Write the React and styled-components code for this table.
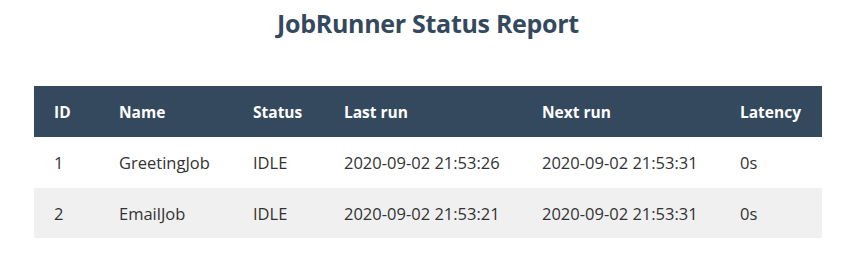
import React from "react";
import styled, { createGlobalStyle } from "styled-components";

const Global = createGlobalStyle`
  html, body { margin: 0; padding: 0; background: #fff; }
  body { font-family: "Open Sans", "Noto Sans", sans-serif; }
`;

const Page = styled.div`
  padding: 0 32px 0 34px;
  display: flex;
  flex-direction: column;
  align-items: center;
`;

const Title = styled.h1`
  margin: 7px 0 47px;
  font-size: 25px;
  line-height: 32px;
  font-weight: 700;
  color: #34495e;
  letter-spacing: -0.3px;
`;

const Table = styled.table`
  width: 788px;
  border-collapse: collapse;
  table-layout: fixed;
  font-size: 16.5px;
  color: #333;
`;

const HeadCell = styled.th`
  height: 51px;
  padding: 0 0 0 20px;
  text-align: left;
  background: #34495e;
  color: #fff;
  font-size: 15.5px;
  font-weight: 700;
`;

const Row = styled.tr`
  background: ${(p) => (p.$alt ? "#f0f0f0" : "#fff")};
`;

const Cell = styled.td`
  height: ${(p) => p.$h || 51}px;
  padding: 0 0 0 20px;
  text-align: left;
`;

const cols = [65, 134, 91, 198, 198, 102];
const headers = ["ID", "Name", "Status", "Last run", "Next run", "Latency"];
const rows = [
  ["1", "GreetingJob", "IDLE", "2020-09-02 21:53:26", "2020-09-02 21:53:31", "0s"],
  ["2", "EmailJob", "IDLE", "2020-09-02 21:53:21", "2020-09-02 21:53:31", "0s"],
];

export default function App() {
  return (
    <>
      <Global />
      <Page>
        <Title>JobRunner Status Report</Title>
        <Table>
          <colgroup>
            {cols.map((w, i) => (
              <col key={i} style={{ width: w }} />
            ))}
          </colgroup>
          <thead>
            <tr>
              {headers.map((h) => (
                <HeadCell key={h}>{h}</HeadCell>
              ))}
            </tr>
          </thead>
          <tbody>
            {rows.map((r, i) => (
              <Row key={i} $alt={i % 2 === 1}>
                {r.map((c, j) => (
                  <Cell key={j} $h={i === 1 ? 50 : 51}>{c}</Cell>
                ))}
              </Row>
            ))}
          </tbody>
        </Table>
      </Page>
    </>
  );
}
